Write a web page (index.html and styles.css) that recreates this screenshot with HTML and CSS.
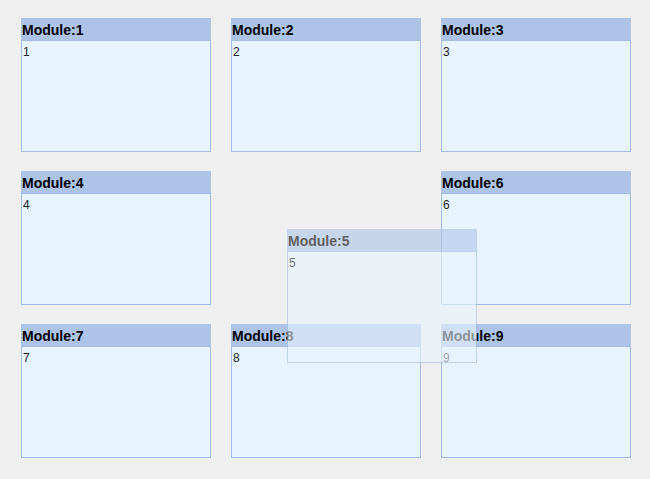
FILE: index.html
```html
<!DOCTYPE html>
<html lang="en">
<head>
    <meta charset="UTF-8">
    <meta name="viewport" content="width=device-width, initial-scale=1.0">
    <title>modules</title>
    <link rel="stylesheet" href="styles.css">
</head>
<body>
    <div class="board">
        <div class="module"><div class="head">Module:1</div><div class="body">1</div></div>
        <div class="module"><div class="head">Module:2</div><div class="body">2</div></div>
        <div class="module"><div class="head">Module:3</div><div class="body">3</div></div>
        <div class="module"><div class="head">Module:4</div><div class="body">4</div></div>
        <!-- empty slot, module 5 is being dragged -->
        <div class="slot"></div>
        <div class="module"><div class="head">Module:6</div><div class="body">6</div></div>
        <div class="module"><div class="head">Module:7</div><div class="body">7</div></div>
        <div class="module"><div class="head">Module:8</div><div class="body">8</div></div>
        <div class="module"><div class="head">Module:9</div><div class="body">9</div></div>

        <div class="module dragging"><div class="head">Module:5</div><div class="body">5</div></div>
    </div>
</body>
</html>
```

FILE: styles.css
```css
body{
    margin: 0;
    background: #efefef;
    font-family: "Liberation Sans", Arial, sans-serif;
}
.board{
    position: relative;
    display: grid;
    grid-template-columns: repeat(3, 190px);
    grid-auto-rows: 134px;
    gap: 19px 20px;
    padding: 18px 0 0 21px;
}
.module{
    box-sizing: border-box;
    border: 1px solid #a3bde2;
    background: #e8f4fd;
    display: flex;
    flex-direction: column;
}
.module>.head{
    background: #adc4e8;
    height: 22px;
    line-height: 25px;
    font-size: 14px;
    font-weight: bold;
    color: #000;
    border-bottom: 1px solid #a3bde2;
    margin: -1px -1px 0 -1px;
    padding-left: 1px;
    overflow: hidden;
}
.module>.body{
    font-size: 12px;
    color: #222;
    padding: 4px 0 0 1px;
}
.dragging{
    position: absolute;
    left: 287px;
    top: 229px;
    width: 190px;
    height: 134px;
    opacity: 0.6;
}
```
